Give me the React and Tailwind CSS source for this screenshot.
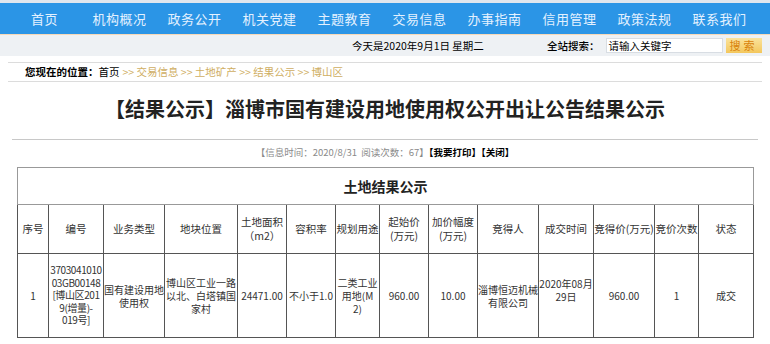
import React from "react";

const navItems = ["首页", "机构概况", "政务公开", "机关党建", "主题教育", "交易信息", "办事指南", "信用管理", "政策法规", "联系我们"];

const cols = [31, 55, 61, 73, 49, 49, 44, 49, 49, 61, 55, 61, 44, 55];

const headers = [
  "序号",
  "编号",
  "业务类型",
  "地块位置",
  "土地面积\n（m2）",
  "容积率",
  "规划用途",
  "起始价\n(万元)",
  "加价幅度\n(万元)",
  "竞得人",
  "成交时间",
  "竞得价(万元)",
  "竞价次数",
  "状态",
];

export default function App() {
  const cell = "border border-[#555] text-center align-middle px-0 whitespace-pre-line";

  return (
    <div className="w-[770px] h-[344px] overflow-hidden bg-white text-[#333]" style={{ fontFamily: '"Noto Sans CJK SC", "Liberation Sans", sans-serif' }}>
      {/* top nav */}
      <div className="h-[3px] bg-[#dfe6ee]" />
      <div className="h-[31px] bg-[#2b95e6] flex items-center pl-[7px]">
        {navItems.map((t) => (
          <div key={t} className="w-[75px] text-center text-[13px] text-[#e3f1ff] tracking-[0.5px]">
            {t}
          </div>
        ))}
      </div>

      {/* date + search */}
      <div className="h-[22px] bg-[#eef1f4] border-t border-[#f7d9b8] flex items-center text-[10.5px] text-black">
        <div className="ml-[352px] w-[180px]">今天是2020年9月1日 星期二</div>
        <div className="ml-[15px] font-medium">全站搜索：</div>
        <div className="ml-[6px] w-[117px] h-[15px] bg-white border border-[#d8dde3] flex items-center pl-[2px] text-[10.5px]">请输入关键字</div>
        <div className="ml-[3px] w-[36px] h-[15px] bg-gradient-to-b from-[#fbe39b] to-[#f3c75c] text-[#d9820b] text-[11px] flex items-center justify-center tracking-[3px]">搜索</div>
      </div>

      {/* breadcrumb */}
      <div className="mt-[6px] mx-[8px] h-[20px] border-y border-[#dcdcdc] flex items-center pl-[17px] text-[10.5px]">
        <span className="font-bold text-black">您现在的位置：</span>
        <span className="text-black">首页</span>
        <span className="text-[#cfae62] ml-[3px]">&gt;&gt; 交易信息 &gt;&gt; 土地矿产 &gt;&gt; 结果公示 &gt;&gt; 博山区</span>
      </div>

      {/* title */}
      <div className="mt-[14px] text-center text-[20px] font-bold text-[#222] leading-[26px]">
        【结果公示】淄博市国有建设用地使用权公开出让公告结果公示
      </div>
      <div className="mt-[17px] mx-[12px] h-px bg-[#c8c8c8]" />
      <div className="mt-[5px] text-center text-[9.5px] leading-[14px]">
        <span className="text-[#8a8a8a]">【信息时间：2020/8/31&nbsp;&nbsp;阅读次数：67】</span>
        <span className="font-bold text-black">【我要打印】【关闭】</span>
      </div>

      {/* table */}
      <table className="mt-[8px] ml-[17px] border-collapse table-fixed w-[736px] text-[10px] leading-[13px]">
        <colgroup>
          {cols.map((w, i) => (
            <col key={i} style={{ width: w }} />
          ))}
        </colgroup>
        <tbody>
          <tr className="h-[37px]">
            <td colSpan={14} className="border border-[#999] text-center text-[14px] font-bold text-[#222]">
              土地结果公示
            </td>
          </tr>
          <tr className="h-[49px] leading-[14px] text-[10.5px]">
            {headers.map((h, i) => (
              <td key={i} className={cell}>{h}</td>
            ))}
          </tr>
          <tr className="h-[84px]">
            <td className={cell}>1</td>
            <td className={`${cell} tracking-[-0.4px] leading-[12.5px]`}>
              {"3703041010\n03GB00148\n[博山区201\n9(增量)-\n019号]"}
            </td>
            <td className={cell}>国有建设用地使用权</td>
            <td className={cell}>博山区工业一路以北、白塔镇国家村</td>
            <td className={cell}>24471.00</td>
            <td className={cell}>不小于1.0</td>
            <td className={cell}>{"二类工业\n用地(M\n2)"}</td>
            <td className={cell}>960.00</td>
            <td className={cell}>10.00</td>
            <td className={cell}>淄博恒迈机械有限公司</td>
            <td className={cell}><div className="pb-[12px]">2020年08月29日</div></td>
            <td className={cell}>960.00</td>
            <td className={cell}>1</td>
            <td className={cell}>成交</td>
          </tr>
        </tbody>
      </table>
    </div>
  );
}
